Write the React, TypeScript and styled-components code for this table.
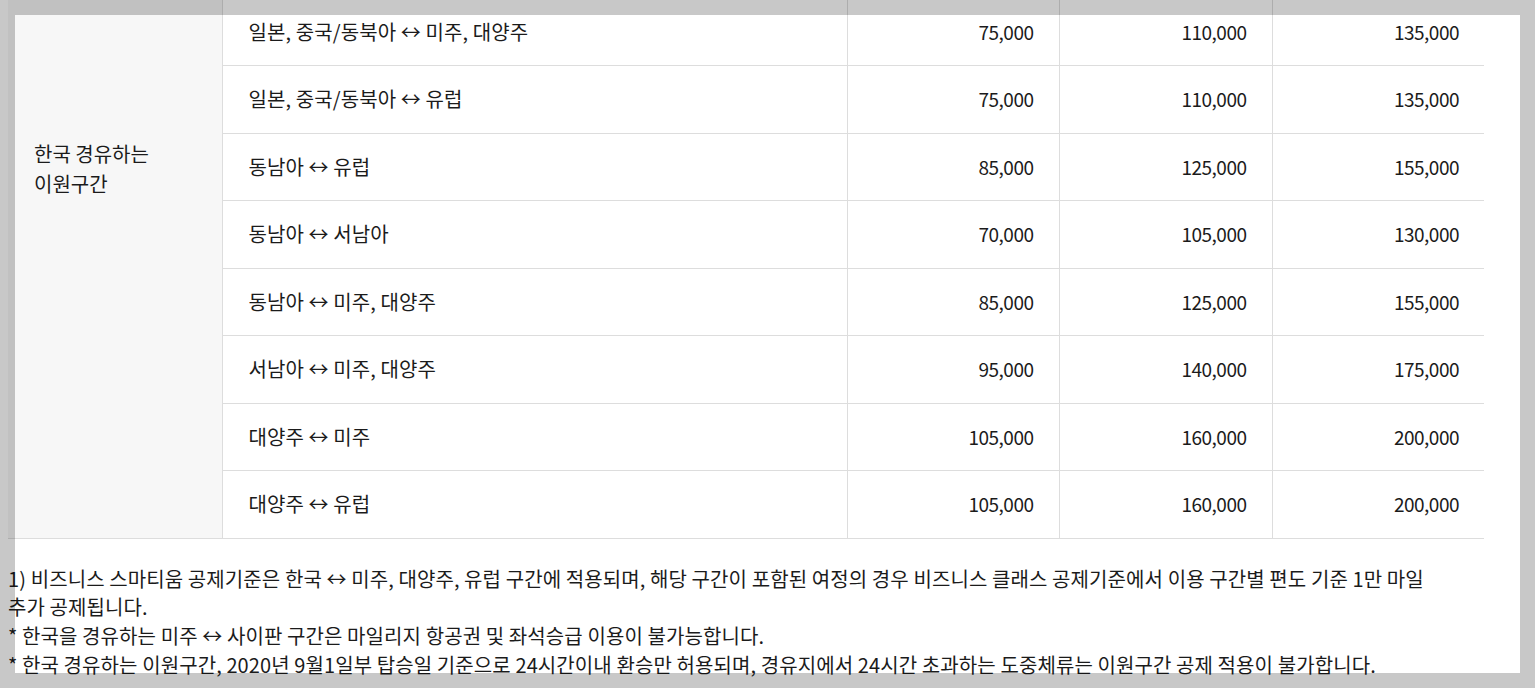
import React from "react";
import styled, { createGlobalStyle } from "styled-components";

const GlobalStyle = createGlobalStyle`
  html, body {
    margin: 0;
    padding: 0;
    background: #ffffff;
    width: 1535px;
    height: 688px;
    overflow: hidden;
  }
  body {
    font-family: "Noto Sans CJK KR", "Noto Sans", "Liberation Sans", sans-serif;
    color: #1b1b1b;
  }
`;

const Page = styled.div`
  width: 1535px;
  height: 688px;
  padding-left: 8px;
  box-sizing: border-box;
  overflow: hidden;
`;

const TableWrap = styled.div`
  margin-top: -2px;
  width: 1476px;
`;

const Table = styled.table`
  width: 1476px;
  table-layout: fixed;
  border-collapse: collapse;
  font-size: 20px;
`;

const Row = styled.tr`
  height: 67.5px;
`;

const GroupCell = styled.td`
  background: #f7f7f7;
  vertical-align: top;
  padding: 141px 26px 0 26px;
  line-height: 30px;
  border-bottom: 1px solid #dddddd;
  border-right: 1px solid #dddddd;
  box-sizing: border-box;
`;

const Cell = styled.td<{ $num?: boolean }>`
  height: 66.5px;
  padding: 0 ${(p) => (p.$num ? "25px" : "26px")};
  text-align: ${(p) => (p.$num ? "right" : "left")};
  font-size: ${(p) => (p.$num ? "19px" : "20px")};
  letter-spacing: ${(p) => (p.$num ? "-0.5px" : "0.1px")};
  vertical-align: middle;
  border-bottom: 1px solid #dddddd;
  border-left: 1px solid #dddddd;
  line-height: 24px;
  white-space: nowrap;
`;

const Notes = styled.div`
  margin-top: 26px;
  width: 1455px;
  font-size: 20px;
  letter-spacing: 0.1px;
  line-height: 28.7px;
  word-break: keep-all;
`;

const Note = styled.p`
  margin: 0;
`;

const Spotlight = styled.div`
  position: fixed;
  left: 15px;
  top: 15px;
  width: 1505px;
  height: 658px;
  box-shadow: 0 0 0 3000px rgba(0, 0, 0, 0.215);
  pointer-events: none;
`;

const rows: [string, string, string, string][] = [
  ["일본, 중국/동북아 ↔ 미주, 대양주", "75,000", "110,000", "135,000"],
  ["일본, 중국/동북아 ↔ 유럽", "75,000", "110,000", "135,000"],
  ["동남아 ↔ 유럽", "85,000", "125,000", "155,000"],
  ["동남아 ↔ 서남아", "70,000", "105,000", "130,000"],
  ["동남아 ↔ 미주, 대양주", "85,000", "125,000", "155,000"],
  ["서남아 ↔ 미주, 대양주", "95,000", "140,000", "175,000"],
  ["대양주 ↔ 미주", "105,000", "160,000", "200,000"],
  ["대양주 ↔ 유럽", "105,000", "160,000", "200,000"],
];

export default function App() {
  return (
    <>
      <GlobalStyle />
      <Page>
        <TableWrap>
          <Table>
            <colgroup>
              <col style={{ width: 214 }} />
              <col style={{ width: 625 }} />
              <col style={{ width: 212 }} />
              <col style={{ width: 213 }} />
              <col style={{ width: 212 }} />
            </colgroup>
            <tbody>
              {rows.map((r, i) => (
                <Row key={i}>
                  {i === 0 && (
                    <GroupCell rowSpan={rows.length}>
                      한국 경유하는
                      <br />
                      이원구간
                    </GroupCell>
                  )}
                  <Cell>{r[0]}</Cell>
                  <Cell $num>{r[1]}</Cell>
                  <Cell $num>{r[2]}</Cell>
                  <Cell $num>{r[3]}</Cell>
                </Row>
              ))}
            </tbody>
          </Table>
        </TableWrap>
        <Notes>
          <Note>
            1) 비즈니스 스마티움 공제기준은 한국 ↔ 미주, 대양주, 유럽 구간에 적용되며, 해당 구간이 포함된 여정의 경우 비즈니스 클래스 공제기준에서 이용 구간별 편도 기준 1만 마일 추가 공제됩니다.
          </Note>
          <Note>* 한국을 경유하는 미주 ↔ 사이판 구간은 마일리지 항공권 및 좌석승급 이용이 불가능합니다.</Note>
          <Note>
            * 한국 경유하는 이원구간, 2020년 9월1일부 탑승일 기준으로 24시간이내 환승만 허용되며, 경유지에서 24시간 초과하는 도중체류는 이원구간 공제 적용이 불가합니다.
          </Note>
        </Notes>
      </Page>
      <Spotlight />
    </>
  );
}
